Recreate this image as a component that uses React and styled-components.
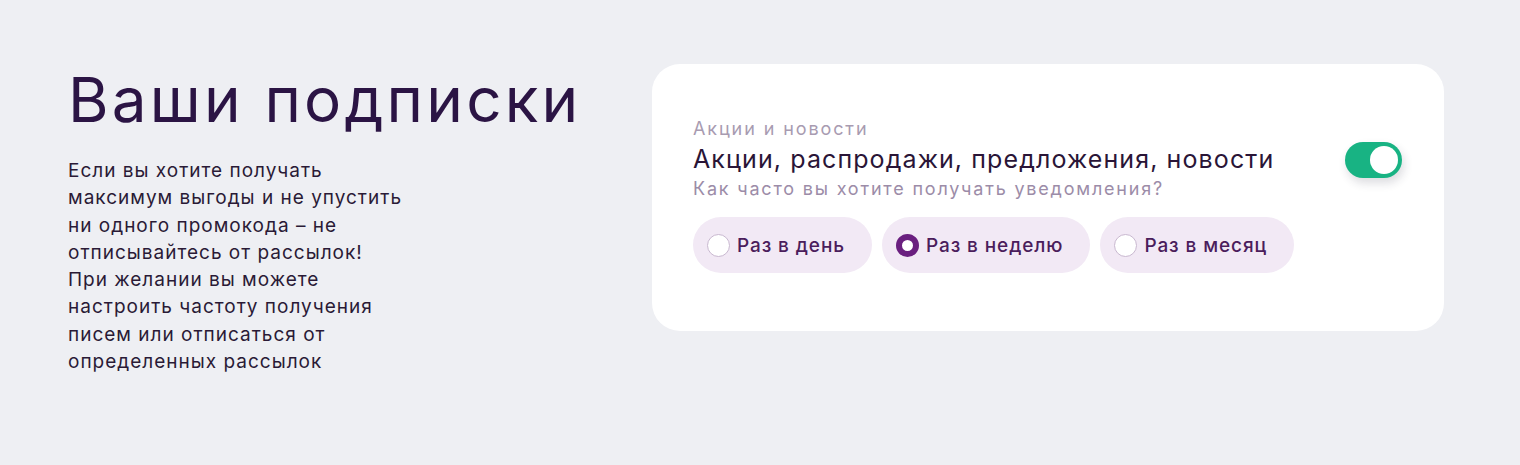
import React, { useState } from 'react';
import styled, { createGlobalStyle } from 'styled-components';

const GlobalStyle = createGlobalStyle`
  html, body {
    margin: 0;
    padding: 0;
    background: #eeeff3;
  }
  body {
    font-family: Inter, 'Noto Sans', sans-serif;
    color: #2a1537;
  }
`;

const Page = styled.div`
  display: flex;
  align-items: flex-start;
  padding: 64px 0 0 68px;
  min-height: 465px;
  box-sizing: border-box;
`;

const Intro = styled.div`
  width: 584px;
  flex-shrink: 0;
`;

const Heading = styled.h1`
  margin: 0;
  font-size: 62px;
  font-weight: 400;
  line-height: 72px;
  color: #2b1444;
  letter-spacing: 3.2px;
`;

const Lead = styled.p`
  margin: 21px 0 0;
  font-size: 19px;
  line-height: 27.3px;
  letter-spacing: 1px;
  color: #2a1a36;
`;

const Card = styled.section`
  width: 792px;
  height: 267px;
  box-sizing: border-box;
  padding: 54px 42px 0 41px;
  background: #fff;
  border-radius: 28px;
`;

const Overline = styled.div`
  font-size: 18px;
  line-height: 22px;
  letter-spacing: 1.9px;
  color: #a89bb1;
`;

const TitleRow = styled.div`
  display: flex;
  align-items: center;
  justify-content: space-between;
`;

const Title = styled.h2`
  margin: 0;
  font-size: 25px;
  font-weight: 400;
  line-height: 30px;
  letter-spacing: 1.1px;
  color: #2a1537;
`;

const Question = styled.div`
  font-size: 18px;
  line-height: 22px;
  letter-spacing: 1.8px;
  color: #9c8ca8;
`;

const Toggle = styled.button`
  position: relative;
  width: 57px;
  height: 36px;
  padding: 0;
  border: none;
  border-radius: 18px;
  background: ${p => (p.$on ? '#18b383' : '#d6ccdc')};
  box-shadow: 2px 5px 10px rgba(40, 40, 60, 0.16);
  cursor: pointer;
  margin-top: 2px;

  &::after {
    content: '';
    position: absolute;
    top: 4px;
    left: ${p => (p.$on ? '25px' : '4px')};
    width: 28px;
    height: 28px;
    border-radius: 50%;
    background: #fff;
  }
`;

const Options = styled.div`
  display: flex;
  gap: 10px;
  margin-top: 17px;
`;

const Pill = styled.label`
  display: flex;
  align-items: center;
  gap: 7px;
  height: 56px;
  padding: 0 27px 0 14px;
  border-radius: 28px;
  background: #f2e9f5;
  font-size: 19px;
  font-weight: 500;
  letter-spacing: 0.9px;
  color: #4b1d5c;
  cursor: pointer;
`;

const Radio = styled.span`
  width: 23px;
  height: 23px;
  box-sizing: border-box;
  border-radius: 50%;
  background: #fff;
  border: ${p => (p.$checked ? '6.5px solid #6a1f7f' : '1.5px solid #c9b8d0')};
  flex-shrink: 0;
`;

const options = ['Раз в день', 'Раз в неделю', 'Раз в месяц'];

const leadLines = [
  'Если вы хотите получать',
  'максимум выгоды и не упустить',
  'ни одного промокода – не',
  'отписывайтесь от рассылок!',
  'При желании вы можете',
  'настроить частоту получения',
  'писем или отписаться от',
  'определенных рассылок',
];

export default function App() {
  const [on, setOn] = useState(true);
  const [freq, setFreq] = useState(1);

  return (
    <>
      <GlobalStyle />
      <Page>
        <Intro>
          <Heading>Ваши подписки</Heading>
          <Lead>
            {leadLines.map((line, i) => (
              <React.Fragment key={i}>
                {line}
                {i < leadLines.length - 1 && <br />}
              </React.Fragment>
            ))}
          </Lead>
        </Intro>
        <Card>
          <Overline>Акции и новости</Overline>
          <TitleRow>
            <Title>Акции, распродажи, предложения, новости</Title>
            <Toggle $on={on} onClick={() => setOn(!on)} aria-label="Подписка" />
          </TitleRow>
          <Question>Как часто вы хотите получать уведомления?</Question>
          <Options>
            {options.map((o, i) => (
              <Pill key={o} onClick={() => setFreq(i)}>
                <Radio $checked={freq === i} />
                {o}
              </Pill>
            ))}
          </Options>
        </Card>
      </Page>
    </>
  );
}
